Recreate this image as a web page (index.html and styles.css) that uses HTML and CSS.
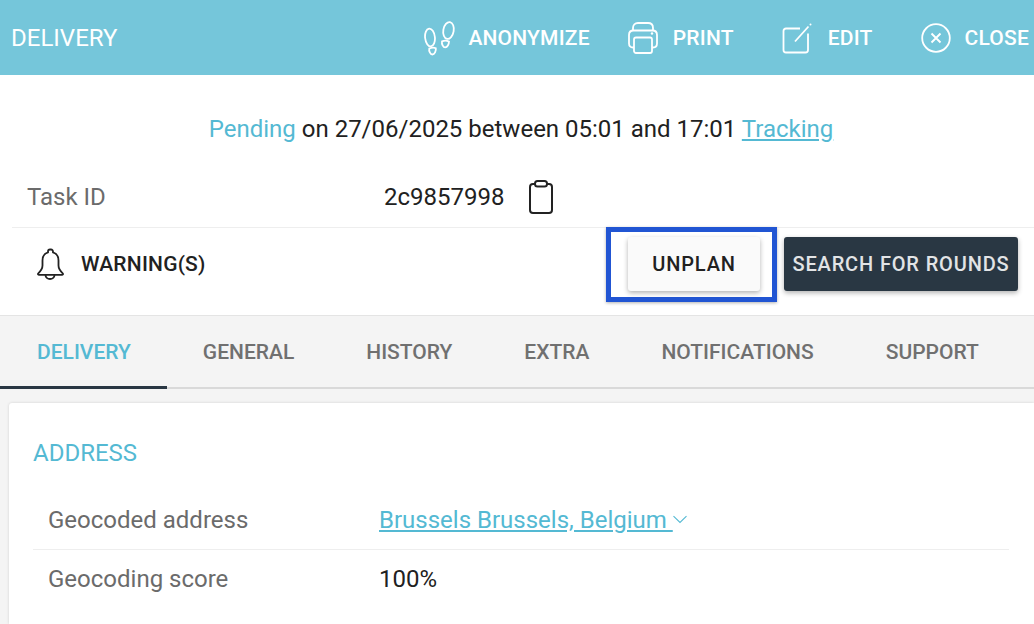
FILE: index.html
```html
<!DOCTYPE html>
<html lang="en">
<head>
<meta charset="utf-8">
<title>Delivery</title>
<link rel="stylesheet" href="styles.css">
</head>
<body>
<header class="topbar">
  <div class="topbar-title">DELIVERY</div>
  <nav class="actions">
    <a class="action act-anon">
      <svg class="act-icon" width="32" height="36" viewBox="0 0 32 36" fill="none" stroke="#fff" stroke-width="1.8">
        <ellipse cx="6" cy="17.500" rx="4.900" ry="9" transform="rotate(-6 6 17.500)"/>
        <path d="M5.300 28.500c2.200-1 5.200-1 6.500-.3.500 2.600-1.300 6.300-3.500 6.300-2 0-3.600-3.400-3-6z"/>
        <ellipse cx="24.500" cy="10.500" rx="5.200" ry="8.500" transform="rotate(10 24.500 10.500)"/>
        <path d="M18 21.300c2.200-.8 5.300-.6 7 .3 0 2.600-1.700 5.900-3.900 5.800-2 0-3.600-3.500-3.100-6.100z"/>
      </svg>
      <span>ANONYMIZE</span>
    </a>
    <a class="action act-print">
      <svg class="act-icon" width="30" height="32" viewBox="0 0 30 32" fill="none" stroke="#fff" stroke-width="1.800">
        <path d="M5 8.500V6C5 3 7 1 10 1h10c3 0 5 2 5 5v2.500"/>
        <path d="M6 25.500H5c-2.500 0-4-1.500-4-4V13c0-2.800 1.700-4.500 4.500-4.500h19c2.800 0 4.500 1.700 4.500 4.500v8.500c0 2.500-1.500 4-4 4h-1"/>
        <rect x="6" y="15.500" width="18" height="15.500" rx="2"/>
        <circle cx="24" cy="11.500" r="1.200" fill="#fff" stroke="none"/>
      </svg>
      <span>PRINT</span>
    </a>
    <a class="action act-edit">
      <svg class="act-icon" width="30" height="32" viewBox="0 0 30 32" fill="none" stroke="#fff" stroke-width="1.800">
        <path d="M18 6.500H4C2.500 6.500 1.500 7.500 1.500 9v19c0 1.500 1 2.500 2.500 2.500h19.500c1.500 0 2.500-1 2.500-2.500V11.500"/>
        <path d="M13 19.500 26.500 4.500"/>
        <circle cx="28.500" cy="2.500" r="1"  fill="#fff" stroke="none"/>
      </svg>
      <span>EDIT</span>
    </a>
    <a class="action act-close">
      <svg class="act-icon" width="30" height="30" viewBox="0 0 30 30" fill="none" stroke="#fff" stroke-width="1.800">
        <circle cx="15" cy="15" r="13.800"/>
        <path d="M10.500 10.500l9 9M19.500 10.500l-9 9" stroke-width="1.900"/>
      </svg>
      <span>CLOSE</span>
    </a>
  </nav>
</header>

<section class="summary">
  <p class="status"><span class="accent">Pending</span> on 27/06/2025 between 05:01 and 17:01 <a class="link">Tracking</a></p>
  <div class="task-row">
    <div class="label task-label">Task ID</div>
    <div class="value">2c9857998</div>
    <svg class="clip" width="26" height="34" viewBox="0 0 26 34" fill="none" stroke="#222" stroke-width="2">
      <path d="M7 4H5C3 4 2 5 2 7v23c0 2 1 3 3 3h16c2 0 3-1 3-3V7c0-2-1-3-3-3h-2"/>
      <rect x="7" y="1" width="12" height="5.500" rx="2.500"/>
    </svg>
  </div>
  <div class="warn-row">
    <div class="warnings">
      <svg width="28" height="32" viewBox="0 0 28 32" fill="none" stroke="#222" stroke-width="1.800">
        <path d="M14 1.500c-1.200 0-2 .9-2 2v.9C8.500 5.400 6.500 8.500 6.500 12.500v5c0 3-1.800 5.500-4.200 7.800-.7.700-.4 1.500.5 1.500h23.400c.9 0 1.200-.8.500-1.500-2.400-2.300-4.200-4.800-4.200-7.800v-5c0-4-2-7.100-5.500-8.100v-.9c0-1.100-.8-2-2-2z"/>
        <path d="M9.500 27c0 2.200 2 4 4.500 4s4.500-1.800 4.500-4"/>
      </svg>
      <span>WARNING(S)</span>
    </div>
    <div class="buttons">
      <div class="highlight"><button class="btn btn-light">UNPLAN</button></div>
      <button class="btn btn-dark">SEARCH FOR ROUNDS</button>
    </div>
  </div>
</section>

<nav class="tabs">
  <a class="tab tab-active">DELIVERY</a>
  <a class="tab">GENERAL</a>
  <a class="tab">HISTORY</a>
  <a class="tab">EXTRA</a>
  <a class="tab">NOTIFICATIONS</a>
  <a class="tab">SUPPORT</a>
</nav>

<main class="content">
  <section class="card">
    <h2 class="card-title">ADDRESS</h2>
    <div class="row row-line">
      <div class="label">Geocoded address</div>
      <div class="value"><a class="link">Brussels Brussels, Belgium </a><svg class="chev" width="16" height="9" viewBox="0 0 16 9" fill="none" stroke="#54b9d3" stroke-width="1.100"><path d="M1.500 1.200 8 7.500l6.500-6.300"/></svg></div>
    </div>
    <div class="row">
      <div class="label">Geocoding score</div>
      <div class="value">100%</div>
    </div>
  </section>
</main>
</body>
</html>
```
FILE: styles.css
```css
* { box-sizing: border-box; }
html, body { margin: 0; padding: 0; }
body {
  width: 1034px;
  height: 624px;
  overflow: hidden;
  background: #f4f4f4;
  font-family: Roboto, "Liberation Sans", sans-serif;
  color: #212121;
}
.topbar {
  height: 75px;
  background: #75c6da;
  color: #fff;
  display: flex;
  align-items: center;
  justify-content: space-between;
  padding-left: 11px;
}
.topbar-title { font-size: 24px; }
.actions { display: flex; align-items: center; }
.action {
  display: flex;
  align-items: center;
  font-size: 21px;
  font-weight: 500;
  letter-spacing: .2px;
  white-space: nowrap;
}
.act-anon { gap: 12px; margin-right: 38px; }
.act-print { gap: 15px; margin-right: 48px; }
.act-edit { gap: 16px; margin-right: 48px; }
.act-close { gap: 14px; margin-right: 5px; }
.summary {
  background: #fff;
  height: 241px;
  border-bottom: 1px solid #e4e4e4;
}
.status {
  margin: 0;
  padding: 41px 0 0 8px;
  height: 94px;
  text-align: center;
  font-size: 24px;
  line-height: 27px;
}
.accent { color: #54b9d3; }
.link { color: #54b9d3; text-decoration: underline; }
.task-row {
  margin-left: 12px;
  height: 59px;
  padding-bottom: 2px;
  display: flex;
  align-items: center;
  border-bottom: 1px solid #eee;
}
.label { color: #6b6b6b; font-size: 24px; width: 346px; padding-left: 15px; }
.task-label { width: 372px; }
.value { font-size: 24px; }
.clip { margin-left: 24px; }
.warn-row {
  display: flex;
  align-items: center;
  justify-content: space-between;
  height: 87px;
  padding: 0 16px 15px 36px;
}
.warnings {
  display: flex;
  align-items: center;
  gap: 17px;
  font-size: 21px;
  font-weight: 500;
  letter-spacing: .2px;
}
.buttons { display: flex; align-items: center; gap: 7px; }
.highlight {
  width: 171px;
  height: 75px;
  border: 5px solid #2155d3;
  box-shadow: 0 1px 3px rgba(0,0,0,.3);
  display: flex;
  align-items: center;
  justify-content: center;
  padding-left: 5px;
}
.btn {
  border: 0;
  border-radius: 3px;
  height: 54px;
  font-family: inherit;
  font-size: 20px;
  font-weight: 500;
  letter-spacing: .85px;
  box-shadow: 0 2px 5px rgba(0,0,0,.3);
}
.btn-light { width: 132px; background: #fafafa; color: #212121; padding: 0; }
.btn-dark { width: 234px; background: #293743; color: #e2e4e6; padding: 0; }
.tabs {
  height: 73px;
  display: flex;
  border-bottom: 2px solid #d9d9d9;
}
.tab {
  padding: 0 36px;
  height: 73px;
  line-height: 73px;
  font-size: 21px;
  font-weight: 500;
  color: #707070;
  white-space: nowrap;
}
.tab-active { color: #54b9d3; border-bottom: 3px solid #293743; padding: 0 36px 0 37px; }
.content { padding: 14px 0 0 9px; }
.card {
  width: 1025px;
  height: 221px;
  background: #fff;
  border-radius: 3px 0 0 0;
  box-shadow: 0 0 3px rgba(0,0,0,.15);
  padding: 0 25px 0 24px;
}
.card-title {
  margin: 0;
  padding-top: 36px;
  font-size: 24px;
  line-height: 28px;
  font-weight: 400;
  color: #54b9d3;
}
.row { display: flex; align-items: center; height: 57px; }
.row-line { margin-top: 22px; height: 61px; padding-top: 1px; border-bottom: 1px solid #eee; }
.chev { margin-left: -1px; vertical-align: 4px; }
```
